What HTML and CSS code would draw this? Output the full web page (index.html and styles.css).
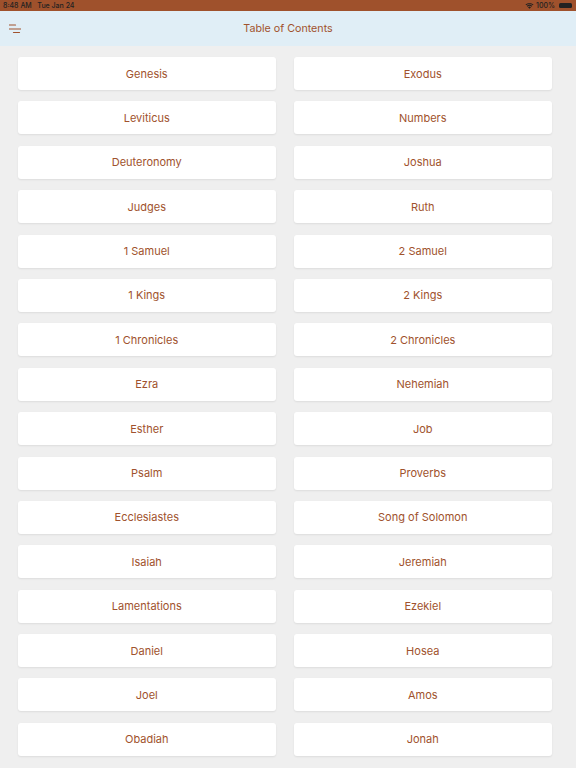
FILE: index.html
```html
<!DOCTYPE html>
<html lang="en">
<head>
    <meta charset="UTF-8">
    <meta name="viewport" content="width=device-width, initial-scale=1.0">
    <title>Table of Contents</title>
    <link rel="stylesheet" href="styles.css">
</head>
<body>
    <div class="status-bar">
        <span class="status-left">8:48 AM&nbsp;&nbsp;&nbsp;Tue Jan 24</span>
        <span class="status-right">
            <svg class="wifi" width="9" height="7" viewBox="0 0 18 14">
                <path d="M9 13.5 L6 10.3 A4.4 4.4 0 0 1 12 10.3 Z" fill="#222"/>
                <path d="M3.6 7.8 A7.8 7.8 0 0 1 14.4 7.8 L13 9.3 A5.8 5.8 0 0 0 5 9.3 Z" fill="#222"/>
                <path d="M1 5 A11.6 11.6 0 0 1 17 5 L15.6 6.5 A9.6 9.6 0 0 0 2.4 6.5 Z" fill="#222"/>
            </svg>
            <span>100%</span>
            <span class="battery"></span>
        </span>
    </div>

    <div class="nav-bar">
        <svg class="menu-icon" width="12" height="10" viewBox="0 0 12 10">
            <line x1="0.5" y1="1" x2="6.5" y2="1" stroke="#a0522d" stroke-width="1.2" stroke-linecap="round"/>
            <line x1="0.5" y1="5" x2="11.5" y2="5" stroke="#a0522d" stroke-width="1.2" stroke-linecap="round"/>
            <line x1="4.5" y1="8.5" x2="10.5" y2="8.5" stroke="#a0522d" stroke-width="1.2" stroke-linecap="round"/>
        </svg>
        <h1>Table of Contents</h1>
    </div>

    <div class="book-grid" id="books"></div>

    <script>
        // Books shown on the first screen, two per row
        var books = ['Genesis', 'Exodus', 'Leviticus', 'Numbers', 'Deuteronomy', 'Joshua',
            'Judges', 'Ruth', '1 Samuel', '2 Samuel', '1 Kings', '2 Kings',
            '1 Chronicles', '2 Chronicles', 'Ezra', 'Nehemiah', 'Esther', 'Job',
            'Psalm', 'Proverbs', 'Ecclesiastes', 'Song of Solomon', 'Isaiah', 'Jeremiah',
            'Lamentations', 'Ezekiel', 'Daniel', 'Hosea', 'Joel', 'Amos',
            'Obadiah', 'Jonah'];

        var grid = document.getElementById('books');
        books.forEach(function(name) {
            var btn = document.createElement('button');
            btn.className = 'book';
            btn.textContent = name;
            grid.appendChild(btn);
        });
    </script>
</body>
</html>
```

FILE: styles.css
```css
html, body {
    margin: 0;
    padding: 0;
    height: 768px;
    overflow: hidden;
}

body {
    font-family: Inter, "Noto Sans", Arial, sans-serif;
    background-color: #efefef;
}

.status-bar {
    height: 11px;
    background-color: #9f512c;
    color: #222;
    font-size: 7px;
    font-weight: 500;
    display: flex;
    align-items: center;
    justify-content: space-between;
    padding: 0 4px 0 3px;
}

.status-right {
    display: flex;
    align-items: center;
    gap: 2px;
}

.battery {
    display: inline-block;
    width: 13px;
    height: 5px;
    border-radius: 1.5px;
    background: #222;
    margin-left: 2px;
}

.nav-bar {
    height: 35px;
    background-color: #e0eef6;
    display: flex;
    align-items: center;
    justify-content: center;
    position: relative;
}

.menu-icon {
    position: absolute;
    left: 9px;
    top: 13px;
}

h1 {
    margin: 0;
    font-size: 10.7px;
    font-weight: 400;
    color: #a0522d;
}

.book-grid {
    display: grid;
    grid-template-columns: 1fr 1fr;
    column-gap: 17.5px;
    row-gap: 11.4px;
    padding: 11px 24px 0 17.5px;
}

.book {
    height: 33px;
    border: none;
    border-radius: 3px;
    background: white;
    box-shadow: 0 1px 2px rgba(0,0,0,0.08);
    font-family: inherit;
    font-size: 11px;
    color: #a0522d;
    cursor: pointer;
    padding: 0;
}
```
